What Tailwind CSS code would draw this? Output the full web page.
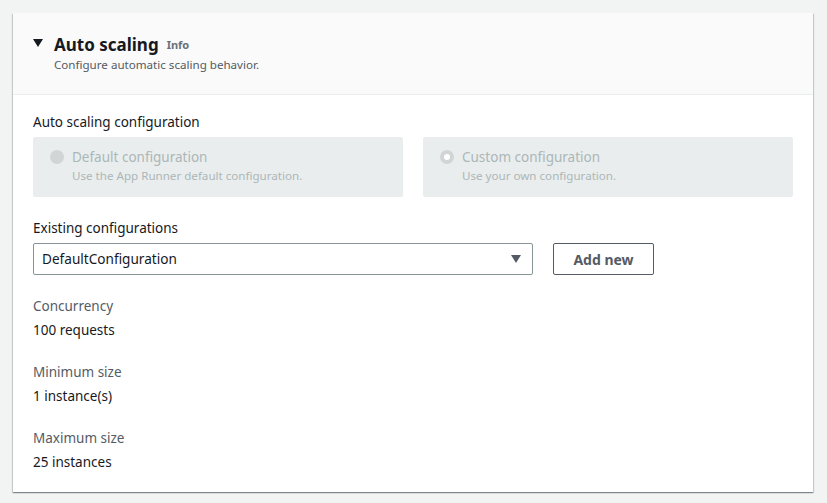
<!doctype html>
<html lang="en">
  <head>
    <script src="https://cdn.jsdelivr.net/npm/@tailwindcss/browser@4"></script>
    <meta charset="UTF-8" />
    <title>Auto scaling</title>
  </head>
  <body class="bg-[#f2f3f3] font-['Noto_Sans',sans-serif] text-[#16191f]">
    <div class="h-[503px] overflow-hidden pt-[13px] pl-[13px] pr-[14px]">
      <section class="h-[479px] bg-white shadow-[0_1px_1px_0_rgba(0,28,36,0.3),1px_1px_1px_0_rgba(0,28,36,0.15),-1px_1px_1px_0_rgba(0,28,36,0.15)]">
        <header class="flex h-[82px] border-b border-[#eaeded] bg-[#fafafa] pl-[20px] pt-[21px]">
          <svg class="mt-[5px] mr-[11px] h-[8px] w-[10px]" viewBox="0 0 10 8"><path d="M0 0h10L5 8z" fill="#16191f" /></svg>
          <div>
            <div class="flex items-center gap-[8px]">
              <h2 class="text-[17px] leading-[22px] font-bold">Auto scaling</h2>
              <a class="text-[11px] leading-[16px] font-bold text-[#687078]">Info</a>
            </div>
            <p class="mt-[1px] text-[11.6px] leading-[16px] text-[#545b64]">Configure automatic scaling behavior.</p>
          </div>
        </header>
        <div class="px-[20px] pt-[17px]">
          <div class="text-[13.5px] leading-[20px]">Auto scaling configuration</div>
          <div class="mt-[5px] grid grid-cols-2 gap-[20px]">
            <div class="flex h-[60px] gap-[8px] rounded-[2px] bg-[#eaeded] pt-[10px] pl-[17px]">
              <span class="mt-[3px] size-[14px] rounded-full bg-[#d1d5d5]"></span>
              <div>
                <div class="text-[13.5px] leading-[20px] text-[#aab7b8]">Default configuration</div>
                <div class="mt-[1px] text-[11.6px] leading-[16px] text-[#aab7b8]">Use the App Runner default configuration.</div>
              </div>
            </div>
            <div class="flex h-[60px] gap-[8px] rounded-[2px] bg-[#eaeded] pt-[10px] pl-[17px]">
              <span class="mt-[3px] size-[14px] rounded-full border-[4px] border-[#d1d5d5] bg-white"></span>
              <div>
                <div class="text-[13.5px] leading-[20px] text-[#aab7b8]">Custom configuration</div>
                <div class="mt-[1px] text-[11.6px] leading-[16px] text-[#aab7b8]">Use your own configuration.</div>
              </div>
            </div>
          </div>
          <div class="mt-[21px] text-[13.5px] leading-[20px]">Existing configurations</div>
          <div class="mt-[5px] flex gap-[20px]">
            <div class="flex h-[32px] w-[500px] items-center justify-between rounded-[2px] border border-[#879596] pl-[8px] pr-[11px] text-[13.6px]">
              <span>DefaultConfiguration</span>
              <svg class="h-[8px] w-[10px]" viewBox="0 0 10 8"><path d="M0 0h10L5 8z" fill="#545b64" /></svg>
            </div>
            <button class="h-[32px] w-[101px] rounded-[2px] border border-[#545b64] text-[14px] font-bold text-[#545b64]">Add new</button>
          </div>
          <dl class="mt-[21px] flex flex-col gap-[22px] text-[13.5px] leading-[20px]">
            <div>
              <dt class="text-[#545b64]">Concurrency</dt>
              <dd class="mt-[4px]">100 requests</dd>
            </div>
            <div>
              <dt class="text-[#545b64]">Minimum size</dt>
              <dd class="mt-[4px]">1 instance(s)</dd>
            </div>
            <div>
              <dt class="text-[#545b64]">Maximum size</dt>
              <dd class="mt-[4px]">25 instances</dd>
            </div>
          </dl>
        </div>
      </section>
    </div>
  </body>
</html>
